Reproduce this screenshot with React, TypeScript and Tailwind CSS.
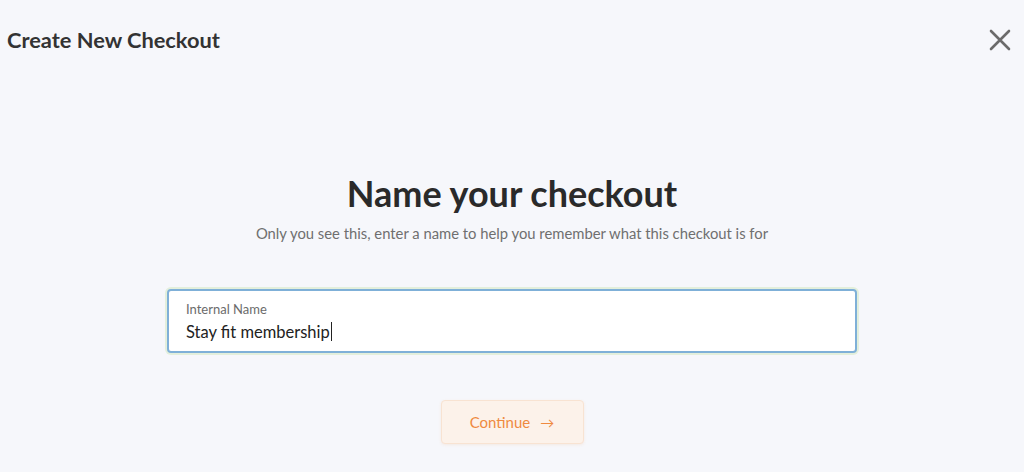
export default function App() {
  return (
    <div className="min-h-screen w-full bg-[#f6f7fb] font-['Lato',sans-serif] text-[#2b2b2b]">
      <div className="flex items-center justify-between pl-[7px] pr-[13px] pt-[25px]">
        <h2 className="text-[21.8px] font-bold leading-[30px] text-[#333]">Create New Checkout</h2>
        <button className="text-[#6b6b6b]">
          <svg width="22" height="22" viewBox="0 0 22 22" fill="none" stroke="currentColor" strokeWidth="2.6" strokeLinecap="round">
            <path d="M2 2 20 20M20 2 2 20" />
          </svg>
        </button>
      </div>

      <div className="mt-[116px] flex flex-col items-center">
        <h1 className="text-[36px] font-bold leading-[44px] text-[#2a2a2a]">Name your checkout</h1>
        <p className="mt-[8px] text-[14.8px] leading-[20px] text-[#6f6f6f]">
          Only you see this, enter a name to help you remember what this checkout is for
        </p>

        <div className="mt-[46px] flex h-[64px] w-[690px] flex-col justify-center rounded-[4px] border-2 border-[#7fb0d8] bg-white px-[17px] shadow-[0_0_0_2px_#e3efdc]">
          <label className="text-[13px] leading-[16px] text-[#6b6b6b]">Internal Name</label>
          <div className="mt-[5px] flex items-center text-[16.5px] leading-[20px] text-[#222]">
            Stay fit membership
            <span className="ml-[1px] inline-block h-[19px] w-px bg-[#222]" />
          </div>
        </div>

        <button className="mt-[47px] flex h-[44px] w-[143px] items-center justify-center gap-[10px] rounded-[4px] border border-[#f8e3d2] bg-[#fcf2ea] text-[15px] text-[#ef8a3f] shadow-[0_1px_3px_rgba(240,140,60,0.12)]">
          Continue <span className="text-[14px]">→</span>
        </button>
      </div>
    </div>
  );
}
